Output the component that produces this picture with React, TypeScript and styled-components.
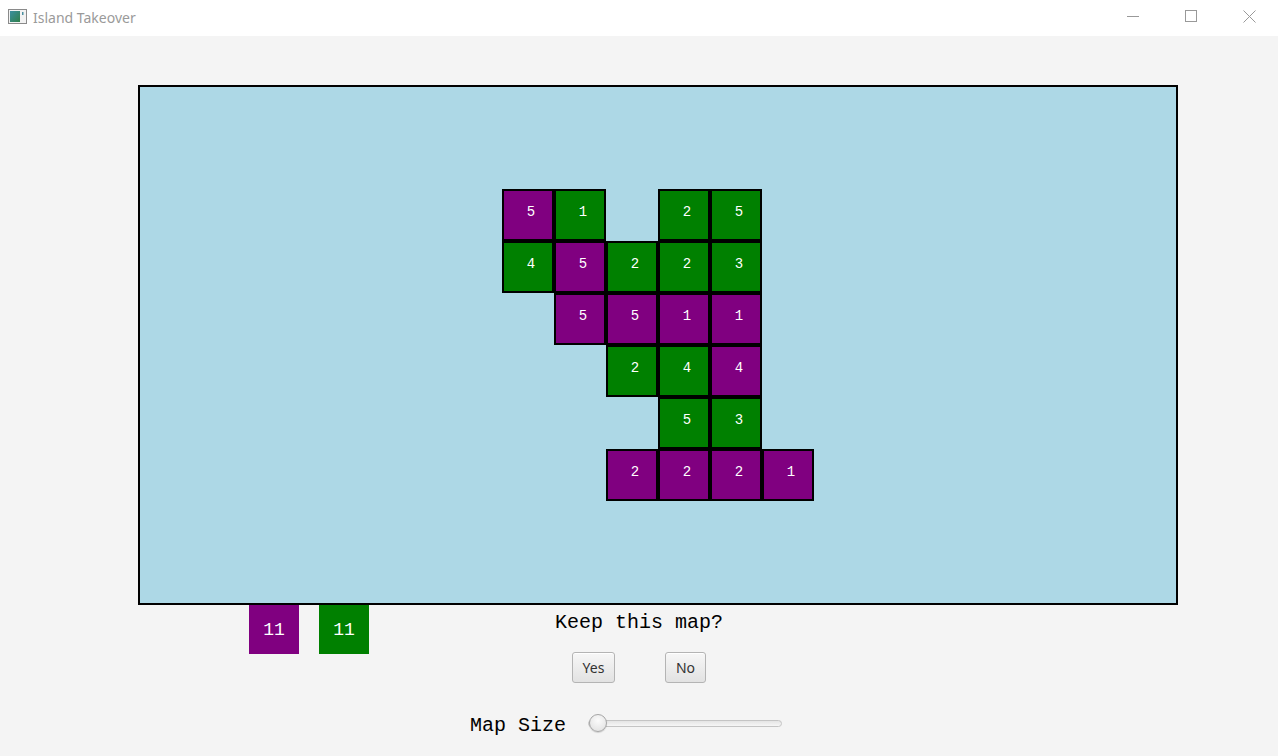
import React from "react";
import styled, { createGlobalStyle } from "styled-components";

const GlobalStyle = createGlobalStyle`
  html, body { margin: 0; padding: 0; }
  body {
    width: 1278px;
    height: 756px;
    overflow: hidden;
    background: #f4f4f4;
    font-family: "Liberation Sans", Arial, sans-serif;
  }
`;

const Window = styled.div`
  width: 1278px;
  height: 756px;
  display: flex;
  flex-direction: column;
  background: #f4f4f4;
`;

const TitleBar = styled.div`
  height: 36px;
  background: #ffffff;
  display: flex;
  align-items: center;
  flex-shrink: 0;
`;

const AppIcon = styled.svg`
  margin-left: 8px;
  width: 19px;
  height: 16px;
  margin-top: -2px;
`;

const Title = styled.span`
  margin-left: 6px;
  font-family: "Noto Sans", "Liberation Sans", sans-serif;
  font-size: 14px;
  color: #9a9a9a;
  margin-top: -2px;
  flex: 1;
`;

const Controls = styled.div`
  display: flex;
  height: 100%;
`;

const ControlButton = styled.div`
  width: 58px;
  height: 100%;
  display: flex;
  align-items: center;
  justify-content: center;
  margin-top: -2px;
`;

const Content = styled.div`
  padding: 49px 0 0 138px;
  display: flex;
  flex-direction: column;
`;

const MapBox = styled.div`
  width: 1040px;
  height: 520px;
  box-sizing: border-box;
  border: 2px solid #000;
  background: #add8e6;
  display: flex;
  align-items: center;
  justify-content: center;
`;

const Grid = styled.div`
  display: grid;
  grid-template-columns: repeat(6, 52px);
  grid-template-rows: repeat(6, 52px);
`;

const Tile = styled.div<{ $color: string }>`
  box-sizing: border-box;
  width: 52px;
  height: 52px;
  border: 2px solid #000;
  background: ${(p) => p.$color};
  color: #ffffff;
  font-family: "Liberation Mono", "Courier New", monospace;
  font-size: 14px;
  display: flex;
  align-items: center;
  justify-content: center;
  padding: 0 0 6px 6px;
`;

const Empty = styled.div``;

const BottomRow = styled.div`
  display: flex;
  align-items: flex-start;
`;

const ScoreGroup = styled.div`
  display: flex;
  gap: 20px;
  margin-left: 111px;
`;

const Score = styled.div<{ $color: string }>`
  width: 50px;
  height: 49px;
  background: ${(p) => p.$color};
  color: #fff;
  font-family: "Liberation Mono", "Courier New", monospace;
  font-size: 18px;
  display: flex;
  align-items: center;
  justify-content: center;
`;

const PromptColumn = styled.div`
  margin-left: 170px;
  width: 200px;
  display: flex;
  flex-direction: column;
  align-items: center;
`;

const Prompt = styled.div`
  margin-top: 8px;
  font-family: "Liberation Mono", "Courier New", monospace;
  font-size: 20px;
  line-height: 20px;
  color: #000;
`;

const ButtonRow = styled.div`
  margin-top: 19px;
  display: flex;
  gap: 50px;
`;

const Button = styled.button<{ $w: number }>`
  width: ${(p) => p.$w}px;
  height: 31px;
  box-sizing: border-box;
  padding: 0 0 1px;
  border: 1px solid #b4b4b4;
  border-radius: 3px;
  background: linear-gradient(to bottom, #f7f7f7, #e2e2e2);
  box-shadow: inset 0 1px 0 #ffffff;
  font-family: "Noto Sans", "Liberation Sans", sans-serif;
  font-size: 14px;
  color: #333;
`;

const SliderRow = styled.div`
  margin-top: 30px;
  margin-left: 332px;
  display: flex;
  align-items: center;
  gap: 22px;
  height: 20px;
`;

const SliderLabel = styled.span`
  font-family: "Liberation Mono", "Courier New", monospace;
  font-size: 20px;
  line-height: 20px;
  color: #000;
  margin-top: 5px;
`;

const Range = styled.input`
  -webkit-appearance: none;
  appearance: none;
  width: 194px;
  height: 18px;
  margin: 0;
  background: transparent;

  &::-webkit-slider-runnable-track {
    height: 7px;
    border-radius: 4px;
    border: 1px solid #c4c4c4;
    background: linear-gradient(to bottom, #e4e4e4, #f6f6f6);
    box-sizing: border-box;
  }
  &::-webkit-slider-thumb {
    -webkit-appearance: none;
    width: 18px;
    height: 18px;
    border-radius: 50%;
    border: 1px solid #a6a6a6;
    background: radial-gradient(circle at 50% 35%, #fbfbfb, #dedede);
    box-shadow: 0 1px 1px rgba(0, 0, 0, 0.15);
    margin-top: -6.5px;
    box-sizing: border-box;
  }
`;

const P = "#800080";
const G = "#008000";

type Cell = [string, number] | null;

const cells: Cell[][] = [
  [[P, 5], [G, 1], null, [G, 2], [G, 5], null],
  [[G, 4], [P, 5], [G, 2], [G, 2], [G, 3], null],
  [null, [P, 5], [P, 5], [P, 1], [P, 1], null],
  [null, null, [G, 2], [G, 4], [P, 4], null],
  [null, null, null, [G, 5], [G, 3], null],
  [null, null, [P, 2], [P, 2], [P, 2], [P, 1]],
];

export default function App() {
  return (
    <Window>
      <GlobalStyle />
      <TitleBar>
        <AppIcon viewBox="0 0 19 16">
          <defs>
            <linearGradient id="ig" x1="0" y1="0" x2="1" y2="1">
              <stop offset="0" stopColor="#3b8fa0" />
              <stop offset="1" stopColor="#2f7f4a" />
            </linearGradient>
          </defs>
          <rect x="0.5" y="0.5" width="18" height="14" fill="#f2f2f2" stroke="#8a8a8a" />
          <rect x="2" y="2" width="10" height="11" fill="url(#ig)" />
          <rect x="14" y="3" width="1.5" height="3" fill="#4a8fa0" />
        </AppIcon>
        <Title>Island Takeover</Title>
        <Controls>
          <ControlButton>
            <svg width="12" height="12" viewBox="0 0 12 12">
              <line x1="0" y1="6.5" x2="12" y2="6.5" stroke="#999" strokeWidth="1" />
            </svg>
          </ControlButton>
          <ControlButton>
            <svg width="12" height="12" viewBox="0 0 12 12">
              <rect x="0.5" y="0.5" width="11" height="11" fill="none" stroke="#999" strokeWidth="1" />
            </svg>
          </ControlButton>
          <ControlButton>
            <svg width="13" height="13" viewBox="0 0 13 13">
              <path d="M0.5 0.5 L12.5 12.5 M12.5 0.5 L0.5 12.5" stroke="#999" strokeWidth="1" />
            </svg>
          </ControlButton>
        </Controls>
      </TitleBar>
      <Content>
        <MapBox>
          <Grid>
            {cells.flatMap((row, r) =>
              row.map((c, ci) =>
                c ? (
                  <Tile key={`${r}-${ci}`} $color={c[0]}>
                    {c[1]}
                  </Tile>
                ) : (
                  <Empty key={`${r}-${ci}`} />
                )
              )
            )}
          </Grid>
        </MapBox>
        <BottomRow>
          <ScoreGroup>
            <Score $color={P}>11</Score>
            <Score $color={G}>11</Score>
          </ScoreGroup>
          <PromptColumn>
            <Prompt>Keep this map?</Prompt>
            <ButtonRow>
              <Button $w={43}>Yes</Button>
              <Button $w={41}>No</Button>
            </ButtonRow>
          </PromptColumn>
        </BottomRow>
        <SliderRow>
          <SliderLabel>Map Size</SliderLabel>
          <Range type="range" min={0} max={100} defaultValue={0} readOnly />
        </SliderRow>
      </Content>
    </Window>
  );
}
